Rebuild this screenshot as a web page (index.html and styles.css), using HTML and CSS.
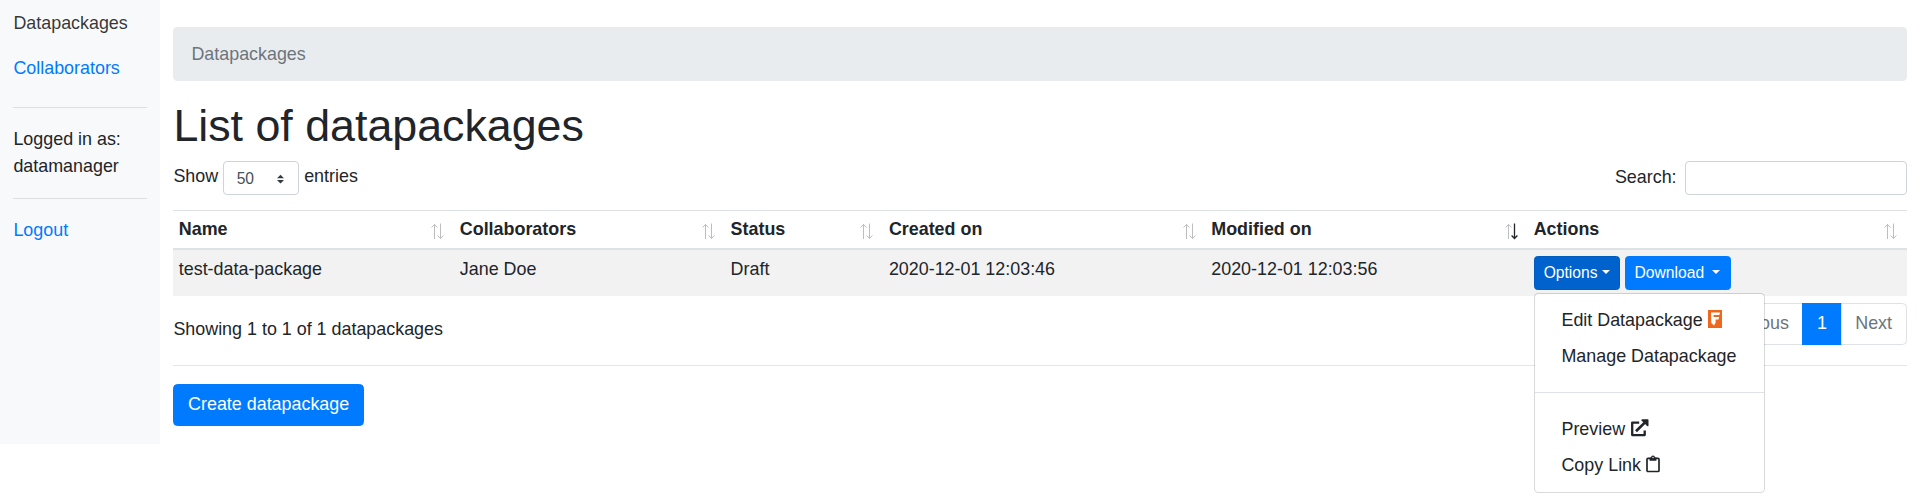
FILE: index.html
```html
<!DOCTYPE html>
<html lang="en">
<head>
<meta charset="utf-8">
<title>Datapackages</title>
<link rel="stylesheet" href="styles.css">
</head>
<body>
<svg class="defs" width="0" height="0"><symbol id="sort" viewBox="0 0 14 17"><path class="up" fill="none" stroke="currentColor" d="M3.500 16V1M.6 4.500L3.500 1.500l2.900 3"/><path class="down" fill="none" stroke="currentColor" d="M9.500 0.500v15M6.600 12.500l2.900 3 2.900-3"/></symbol></svg>
<div class="layout">
  <nav class="sidebar">
    <a class="nav-link current">Datapackages</a>
    <a class="nav-link">Collaborators</a>
    <hr>
    <div class="user">Logged in as:<br>datamanager</div>
    <hr>
    <a class="logout">Logout</a>
  </nav>
  <main class="content">
    <div class="breadcrumb">Datapackages</div>
    <h1>List of datapackages</h1>
    <div class="controls">
      <div class="length">Show
        <span class="select">50<svg width="7" height="10" viewBox="0 0 4 5"><path fill="#343a40" d="M2 0L0 2h4zm0 5L0 3h4z"/></svg></span>
        entries</div>
      <label class="search">Search:<input type="text" class="search-input"></label>
    </div>
    <table class="table">
      <colgroup><col class="c-name"><col class="c-collab"><col class="c-status"><col class="c-created"><col class="c-modified"><col></colgroup>
      <thead>
        <tr>
          <th>Name<svg class="sort"><use href="#sort"/></svg></th>
          <th>Collaborators<svg class="sort"><use href="#sort"/></svg></th>
          <th>Status<svg class="sort"><use href="#sort"/></svg></th>
          <th>Created on<svg class="sort"><use href="#sort"/></svg></th>
          <th>Modified on<svg class="sort desc" viewBox="0 0 14 17"><path fill="none" stroke="#bcbec0" d="M3.500 16V1M.6 4.500L3.500 1.500l2.900 3"/><path fill="none" stroke="#212529" stroke-width="1.300" d="M9.500 0.500v15M6.600 12.500l2.900 3 2.900-3"/></svg></th>
          <th>Actions<svg class="sort"><use href="#sort"/></svg></th>
        </tr>
      </thead>
      <tbody>
        <tr>
          <td>test-data-package</td><td>Jane Doe</td><td>Draft</td><td>2020-12-01 12:03:46</td><td>2020-12-01 12:03:56</td>
          <td>
            <div class="actions">
              <div class="dropdown">
                <button class="btn btn-sm active">Options<span class="caret"></span></button>
                <div class="menu">
                  <a class="item">Edit Datapackage <svg class="logo" width="14" height="18" viewBox="0 0 14 18"><path fill="#ed681c" d="M0 0h14v18H0z"/><path fill="#fff" d="M3 2.600h9l-.6 2.400H5.600v2h5.600l-.7 2.400H7.600v3.400L6 15.400 3.300 13z"/></svg></a>
                  <a class="item">Manage Datapackage</a>
                  <hr>
                  <a class="item">Preview <svg class="ext" width="19" height="18" viewBox="0 0 19 18"><path fill="none" stroke="#212529" stroke-width="2.300" stroke-linejoin="round" d="M9.200 3.600H2.200v12.500h12.500v-4.600"/><path fill="none" stroke="#212529" stroke-width="2.700" d="M6 12.300L15 3.400"/><path fill="#212529" d="M12 .2h5.800q.7 0 .7.700v5.800q-.5 1-1.400.3l-5.600-5.400Q11.200.5 12 .2z"/></svg></a>
                  <a class="item">Copy Link <svg class="clip" width="14" height="18" viewBox="0 0 14 18"><rect x="1" y="3.300" width="12" height="13.200" rx="1" fill="none" stroke="#212529" stroke-width="1.700"/><path fill="#212529" d="M3.600 2.500H5a2 2 0 0 1 4 0h1.400v3.200H3.600z"/><circle cx="7" cy="2.500" r=".7" fill="#fff"/></svg></a>
                </div>
              </div>
              <button class="btn btn-sm download">Download <span class="caret"></span></button>
            </div>
          </td>
        </tr>
      </tbody>
    </table>
    <div class="footer">
      <div class="info">Showing 1 to 1 of 1 datapackages</div>
      <div class="pagination"><a class="page">Previous</a><a class="page on">1</a><a class="page">Next</a></div>
    </div>
    <hr class="rule">
    <button class="btn">Create datapackage</button>
  </main>
</div>
</body>
</html>
```
FILE: styles.css
```css
*{box-sizing:border-box}
body{margin:0;min-height:500px;font:17.9px/27px "Liberation Sans",Arial,sans-serif;color:#212529;background:#fff}
hr{border:0;border-top:1px solid rgba(0,0,0,.1);margin:18px 0}
.defs{position:absolute}
.layout{display:flex;height:444px}
.sidebar{width:160px;background:#f8f9fa;padding:1px 13.400px 0}
.nav-link{display:block;padding:9px 0;color:#007bff}
.nav-link + .nav-link{padding:8.500px 0 7.500px}
.nav-link + hr{margin:18px 0}
.nav-link.current{color:rgba(0,0,0,.8)}
.user + hr{margin:18px 0}
.logout{display:block;color:#007bff}
.content{flex:1;padding:27px 13.400px 0}
.breadcrumb{height:53.700px;padding:13.700px 18px 13px;background:#e9ecef;border-radius:4.500px;color:#6c757d}
h1{font-size:44.750px;line-height:54px;font-weight:400;margin:17.300px 0 8.800px}
.controls{display:flex;justify-content:space-between;height:49px}
.length{display:flex;gap:5px;height:31px;align-items:center}
.select{display:flex;justify-content:space-between;align-items:center;width:76px;height:34px;padding:2px 14px 0 12.500px;border:1px solid #ced4da;border-radius:4px;font-size:15.650px;color:#495057;position:relative;top:1.500px}
.search{display:flex;align-items:center;gap:8px;height:34px}
.search-input{width:222px;height:34px;border:1px solid #ced4da;border-radius:4px}
.table{width:100%;table-layout:fixed;border-collapse:separate;border-spacing:0}
.c-name{width:281px}
.c-collab{width:270.800px}
.c-status{width:158.300px}
.c-created{width:322.400px}
.c-modified{width:322.400px}
th,td{text-align:left;vertical-align:top;padding:5.400px;border-top:1px solid #dee2e6}
th{position:relative;height:40px;padding-bottom:4.500px;border-bottom:2px solid #dee2e6}
.sort{position:absolute;top:12px;right:9px;width:14px;height:17px;color:#bcbec0}
td{background:#f2f2f2;height:46px;border-top:0;padding-top:6px}
.actions{display:flex;gap:5px}
.dropdown{position:relative}
.btn{font:17.900px/26.800px "Liberation Sans",Arial,sans-serif;color:#fff;background:#007bff;border:1px solid #007bff;border-radius:4.500px;padding:6.600px 13.700px;display:block}
.btn-sm{font-size:15.650px;line-height:23.500px;padding:4.200px 9px;border-radius:3.600px;white-space:pre}
.active{background:#0062cc;border-color:#005cbf}
.download{padding-right:9.800px}
.caret{display:inline-block;margin-left:4px;vertical-align:4px;border-top:4.700px solid;border-left:4.700px solid transparent;border-right:4.700px solid transparent}
.menu{position:absolute;z-index:5;top:37px;left:0;width:231px;height:200px;padding:8.500px 0;background:#fff;border:1px solid rgba(0,0,0,.15);background-clip:padding-box;border-radius:4.500px}
.item{display:block;height:36px;padding:4.500px 26.800px;white-space:nowrap}
.menu hr{border-color:#e0e3e6;margin:18px 0 18.200px}
.logo,.ext,.clip{vertical-align:-2px}
.footer{display:flex;justify-content:space-between;padding-top:7px}
.info{padding-top:13px}
.pagination{display:flex;height:42px}
.page{padding:6.500px 13.600px;border:1px solid #dee2e6;margin-left:-1px;color:#6c757d}
.page:last-child{border-radius:0 4.500px 4.500px 0}
.page:first-child{border-radius:4.500px 0 0 4.500px}
.page.on{background:#007bff;border-color:#007bff;color:#fff}
.rule{margin:20px 0 18px}
```
